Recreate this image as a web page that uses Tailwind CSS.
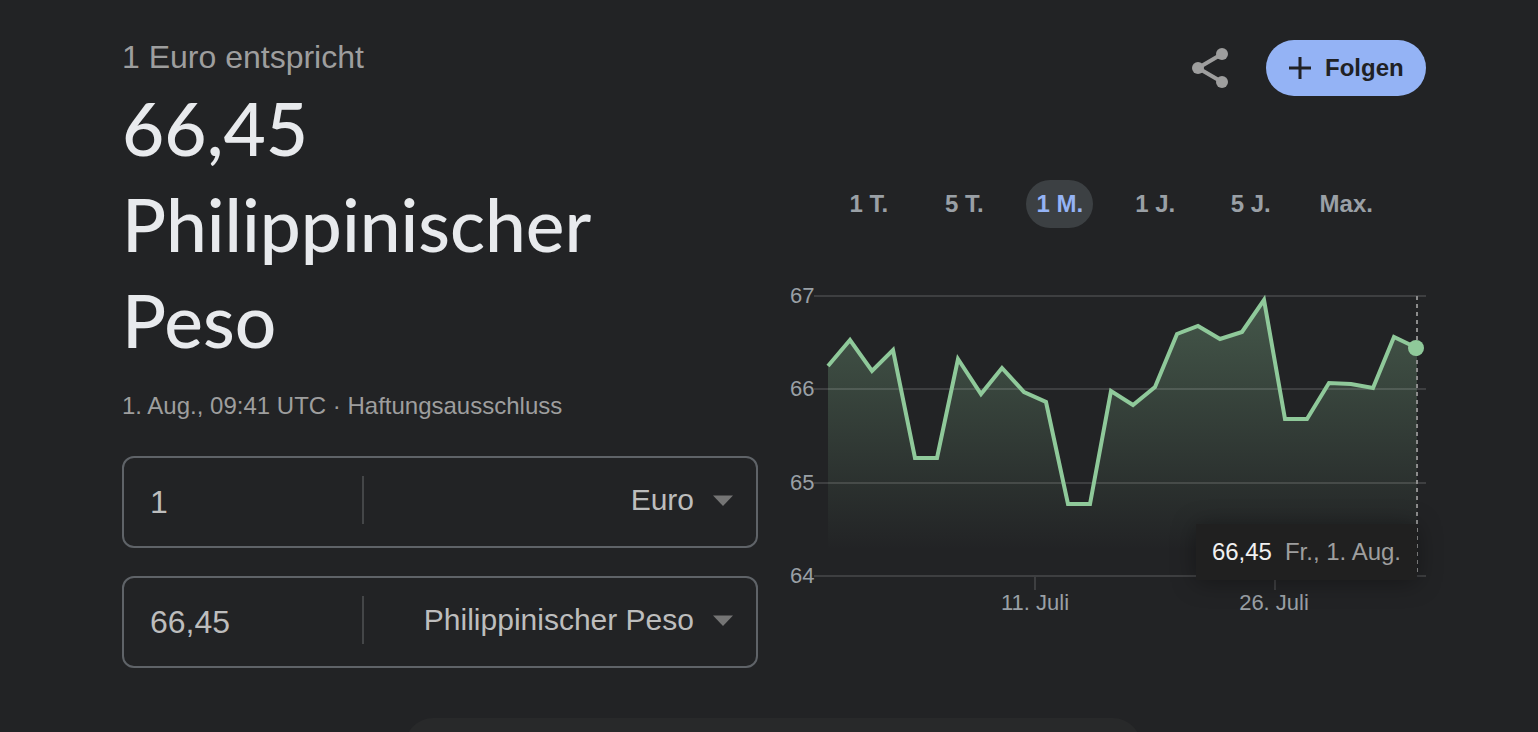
<!DOCTYPE html>
<html lang="de">

<head>
    <meta charset="UTF-8">
    <meta name="viewport" content="width=device-width, initial-scale=1.0">
    <title>Euro in Philippinischer Peso</title>
    <script src="https://cdn.jsdelivr.net/npm/@tailwindcss/browser@4"></script>
</head>

<body class="flex min-h-screen flex-col justify-between bg-[#222325] font-['Liberation_Sans',Arial,sans-serif] text-[#9e9e9e]">
    <main class="grid grid-cols-2 gap-8 pt-9 pr-28 pl-[122px]">
        <section>
            <p class="text-[32px] leading-[42px]">1 Euro entspricht</p>
            <h1 class="mt-[2px] font-[Lato,sans-serif] text-[73px] leading-24 font-medium text-[#e8eaed]">66,45<br>Philippinischer<br>Peso</h1>
            <p class="mt-[22px] text-2xl leading-8">1. Aug., 09:41 UTC · <a href="#">Haftungsausschluss</a></p>

            <form class="mt-[34px] flex flex-col gap-7 text-[#bdbdbd]">
                <div class="flex h-[92px] items-center rounded-xl border-2 border-[#5f6368] pb-1">
                    <input type="text" value="1" aria-label="Betrag in Euro" class="h-12 w-[240px] border-r-2 border-[#444648] pt-1 pl-[26px] text-[32px] outline-none">
                    <div class="relative flex-1">
                        <select aria-label="Ausgangswährung" class="h-12 w-full appearance-none pr-[62px] pb-[2px] text-right text-[30px] [text-align-last:right] outline-none">
                            <option>Euro</option>
                        </select>
                        <svg class="pointer-events-none absolute top-[19px] right-[23px] h-3 w-5" viewBox="0 0 20 12" fill="#757575"><path d="M0 0.500h20L10 11z"/></svg>
                    </div>
                </div>
                <div class="flex h-[92px] items-center rounded-xl border-2 border-[#5f6368] pb-1">
                    <input type="text" value="66,45" aria-label="Betrag in Philippinischem Peso" class="h-12 w-[240px] border-r-2 border-[#444648] pt-1 pl-[26px] text-[32px] outline-none">
                    <div class="relative flex-1">
                        <select aria-label="Zielwährung" class="h-12 w-full appearance-none pr-[62px] pb-[2px] text-right text-[30px] [text-align-last:right] outline-none">
                            <option>Philippinischer Peso</option>
                        </select>
                        <svg class="pointer-events-none absolute top-[19px] right-[23px] h-3 w-5" viewBox="0 0 20 12" fill="#757575"><path d="M0 0.500h20L10 11z"/></svg>
                    </div>
                </div>
            </form>
        </section>

        <section class="pt-1">
            <div class="flex items-center justify-end gap-[37px]">
                <button type="button" aria-label="Teilen">
                    <svg class="h-10 w-[37px]" viewBox="0 0 37 40" fill="#9e9e9e" stroke="#9e9e9e">
                        <path d="M30 6 6 20l24 14" fill="none" stroke-width="4"/>
                        <circle cx="30" cy="6" r="6" stroke="none"/>
                        <circle cx="6" cy="20" r="6" stroke="none"/>
                        <circle cx="30" cy="34" r="6" stroke="none"/>
                    </svg>
                </button>
                <button type="button" class="flex h-14 w-40 items-center gap-[14px] rounded-full bg-[#94b3f5] pl-[23px] text-2xl font-bold text-[#202124]">
                    <svg class="size-[22px] shrink-0" viewBox="0 0 22 22" fill="none" stroke="#202124" stroke-width="3"><path d="M11 0v22M0 11h22"/></svg>
                    Folgen
                </button>
            </div>

            <div class="mt-21 grid grid-cols-6 justify-items-center pr-8 pl-[31px] text-2xl font-bold text-[#9aa0a6]">
                <button type="button" class="h-12 rounded-full px-[10px]">1 T.</button>
                <button type="button" class="h-12 rounded-full px-[10px]">5 T.</button>
                <button type="button" class="h-12 rounded-full bg-[#3c4043] px-[10px] text-[#94b3f5]">1 M.</button>
                <button type="button" class="h-12 rounded-full px-[10px]">1 J.</button>
                <button type="button" class="h-12 rounded-full px-[10px]">5 J.</button>
                <button type="button" class="h-12 rounded-full px-[10px]">Max.</button>
            </div>

            <div class="relative mt-[52px]">
                <svg class="w-full" viewBox="0 0 636 340" font-size="22" fill="#9aa0a6">
                    <defs>
                        <linearGradient id="area" gradientUnits="userSpaceOnUse" x1="0" y1="16" x2="0" y2="270">
                            <stop offset="0" stop-color="#8fc99a" stop-opacity="0.32"/>
                            <stop offset="1" stop-color="#8fc99a" stop-opacity="0"/>
                        </linearGradient>
                    </defs>
                    <path d="M38 86 60 60 82 91 103 70 125 178H147L168 79 191 114 212 88 234 112 256 122 278 224H300L321 111 343 125 365 107 387 54 408 46 430 59 452 52 474 20 495 139H517L539 103 561 104 583 108 604 57 627 68V296H38z" fill="url(#area)"/>
                    <path d="M24 16H636M24 109H636M24 203H636M24 296H636M245 296V310M485 296V310" fill="none" stroke="#fff" stroke-opacity="0.13" stroke-width="2"/>
                    <path d="M38 86 60 60 82 91 103 70 125 178H147L168 79 191 114 212 88 234 112 256 122 278 224H300L321 111 343 125 365 107 387 54 408 46 430 59 452 52 474 20 495 139H517L539 103 561 104 583 108 604 57 627 68" fill="none" stroke="#8fc99a" stroke-width="4"/>
                    <path d="M627 16V296" stroke="#8c8c8c" stroke-width="2" stroke-dasharray="4 4"/>
                    <circle cx="626" cy="68" r="8" fill="#8fc99a"/>
                    <text x="0" y="23">67</text>
                    <text x="0" y="116">66</text>
                    <text x="0" y="210">65</text>
                    <text x="0" y="303">64</text>
                    <text x="245" y="330" text-anchor="middle">11. Juli</text>
                    <text x="484" y="330" text-anchor="middle">26. Juli</text>
                </svg>
                <div class="absolute right-[9px] bottom-10 flex h-14 items-center gap-[13px] bg-[#202020] px-4 text-2xl whitespace-nowrap shadow-[0_2px_24px_rgba(0,0,0,0.35)]">
                    <span class="text-[#f1f1f1]">66,45</span>
                    <span>Fr., 1. Aug.</span>
                </div>
            </div>
        </section>
    </main>

    <!-- top edge of the "more" button -->
    <div class="flex h-[14px] justify-center overflow-hidden pl-2">
        <div class="h-14 w-[736px] shrink-0 rounded-full bg-[#28292a]"></div>
    </div>
</body>
</html>
